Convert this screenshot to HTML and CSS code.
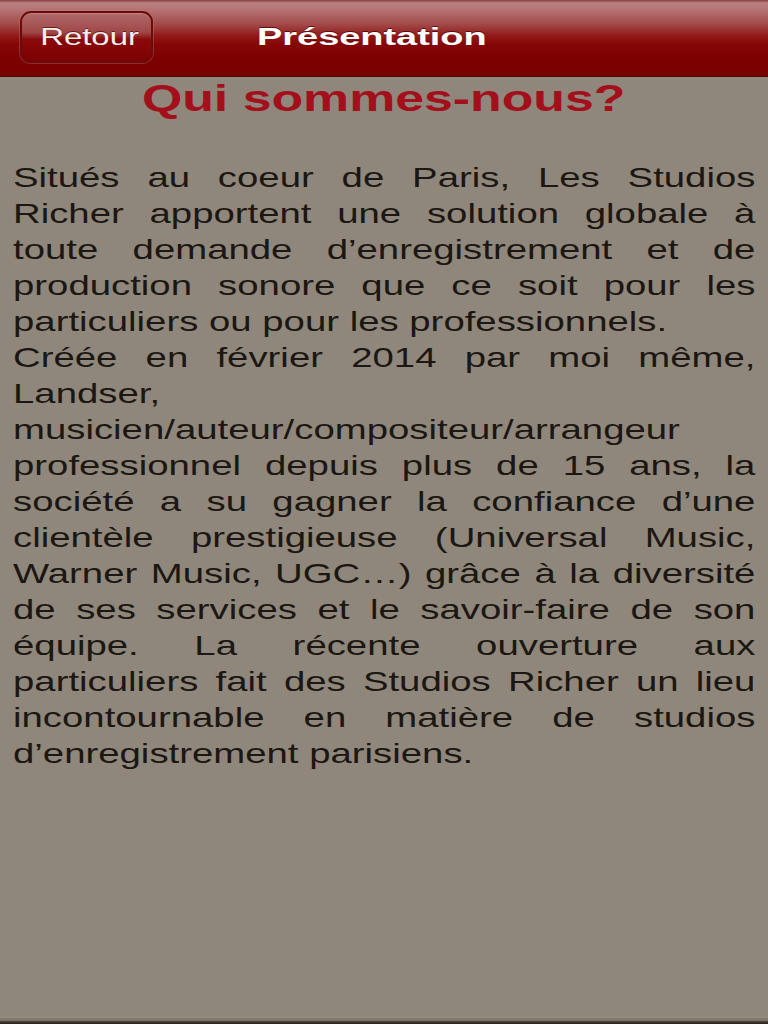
FILE: index.html
```html
<!DOCTYPE html>
<html lang="fr">
<head>
<meta charset="utf-8">
<title>Présentation</title>
<link rel="stylesheet" href="styles.css">
</head>
<body>
<div class="page">
  <header class="navbar">
    <button class="back-btn"><span class="back-label">Retour</span></button>
    <h1 class="nav-title"><span class="nav-title-text">Présentation</span></h1>
  </header>
  <main class="content">
    <h2 class="heading"><span class="heading-text">Qui sommes-nous?</span></h2>
    <div class="body-block">
      <p class="body-text">Situés au coeur de Paris, Les Studios Richer apportent une solution globale à toute demande d’enregistrement et de production sonore que ce soit pour les particuliers ou pour les professionnels.</p>
      <p class="body-text">Créée en février 2014 par moi même, Landser, musicien/auteur/compositeur/arrangeur professionnel depuis plus de 15 ans, la société a su gagner la confiance d’une clientèle prestigieuse (Universal Music, Warner Music, UGC…) grâce à la diversité de ses services et le savoir-faire de son équipe. La récente ouverture aux particuliers fait des Studios Richer un lieu incontournable en matière de studios d’enregistrement parisiens.</p>
    </div>
  </main>
  <footer class="bottom-edge"></footer>
</div>
</body>
</html>
```
FILE: styles.css
```css
* { box-sizing: border-box; }
html, body { margin: 0; padding: 0; }
body {
  background: #8f877b;
  font-family: "Liberation Sans", Arial, sans-serif;
}
.page {
  display: flex;
  flex-direction: column;
  height: 1024px;
  overflow: hidden;
}
.navbar {
  height: 77px;
  flex: none;
  display: flex;
  align-items: center;
  padding-left: 20px;
  padding-bottom: 2px;
  background: linear-gradient(to bottom,
    #8a3c3c 0px, #b98282 3px, #b47272 10px, #a24a4a 24px,
    #921818 36px, #860606 44px, #7c0000 60px, #780000 76px);
  border-bottom: 1px solid #4a0a08;
}
.back-btn {
  width: 133px;
  height: 52px;
  border-radius: 11px;
  border: 2px solid #6a0c0c;
  box-shadow: 0 0 0 1px rgba(200,120,120,0.35), inset 0 1px 0 rgba(255,200,200,0.25);
  background: linear-gradient(to bottom, #b06a6a 0%, #a04848 40%, #8a0a0a 55%, #7e0000 100%);
  display: flex;
  align-items: center;
  justify-content: center;
  padding: 0 0 0 6px;
  cursor: pointer;
}
.back-label {
  display: inline-block;
  font-family: "Liberation Sans", Arial, sans-serif;
  font-size: 23px;
  color: #f4eeee;
  transform: scaleX(1.43);
  text-shadow: 0 -1px 0 rgba(60,0,0,0.6);
}
.nav-title {
  margin: 0 0 0 104px;
  font-size: 24px;
  font-weight: bold;
  color: #ffffff;
  line-height: 1;
}
.nav-title-text {
  display: inline-block;
  transform: scaleX(1.58);
  transform-origin: left center;
  text-shadow: 0 -1px 0 rgba(60,0,0,0.7);
}
.content {
  flex: 1;
  padding: 0 13px;
}
.heading {
  margin: 0 0 38px;
  text-align: center;
  font-size: 37px;
  line-height: 44px;
  font-weight: bold;
  color: #a3101c;
}
.heading-text {
  display: inline-block;
  transform: scaleX(1.4);
}
.body-block {
  width: 552px;
  transform: scaleX(1.345);
  transform-origin: left top;
}
.body-text {
  margin: 0;
  font-size: 28.5px;
  line-height: 36px;
  color: #1c1712;
  text-align: justify;
}
.bottom-edge {
  flex: none;
  height: 8px;
  background: linear-gradient(to bottom, #8a8276 0px, #9a9286 1px, #7a7266 3px, #8a8276 4px, #3a342c 6px, #2a241c 8px);
}
```
